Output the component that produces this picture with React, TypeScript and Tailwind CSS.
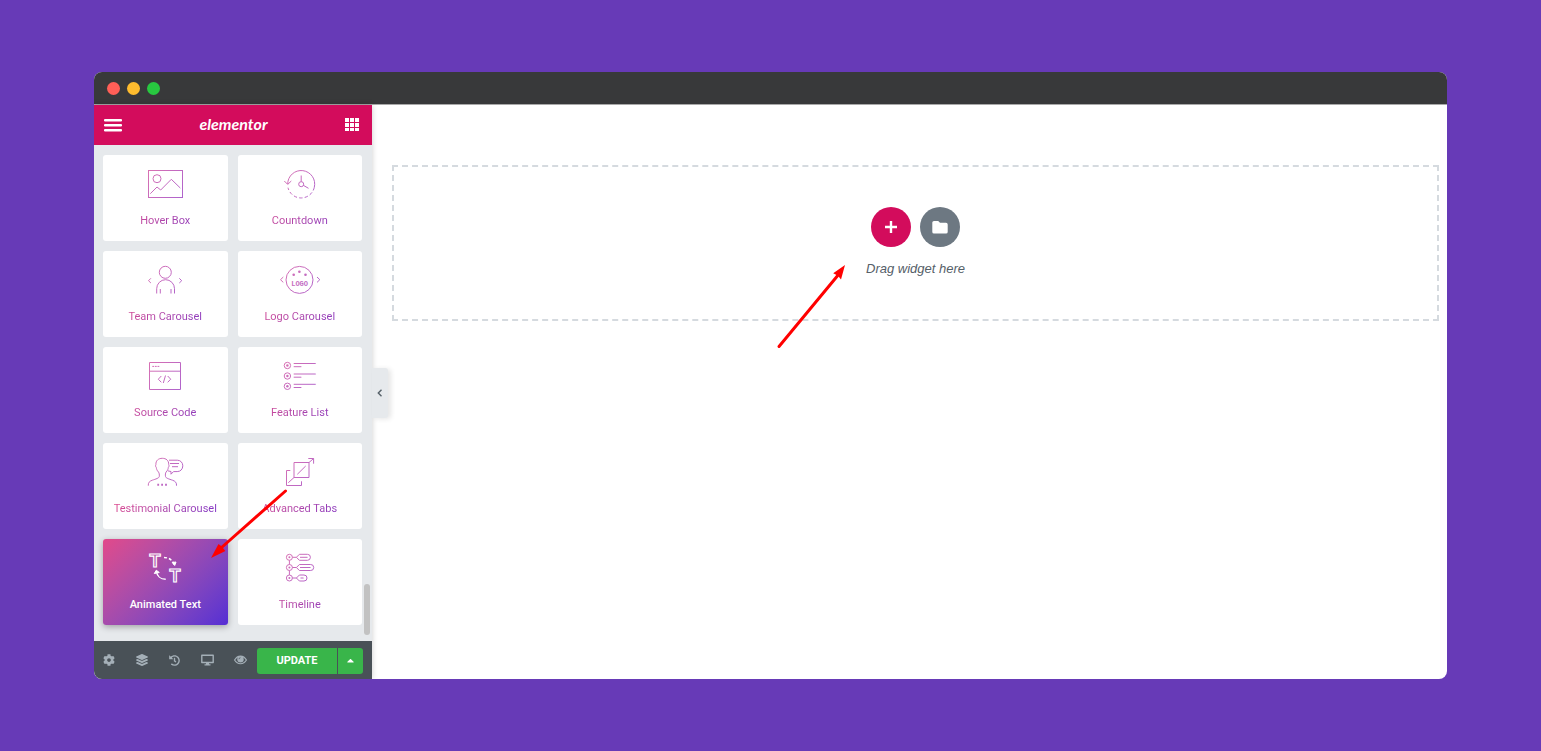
import React from "react";
import { FaCog, FaHistory, FaLayerGroup, FaCaretUp } from "react-icons/fa";

const HoverBoxIcon = () => (
  <>
    <rect x="3.5" y="1.5" width="34" height="27" />
    <circle cx="12" cy="9.7" r="4" />
    <path d="M5.3 24.7 12 18l3.7 3L26.3 10.3l9 8.7" />
  </>
);

const CountdownIcon = () => (
  <>
    <path d="M7.700 15a13.500 13.500 0 1 1 26.600 3.300" />
    <path d="M34.300 18.300A13.500 13.500 0 0 1 8 18.700" strokeDasharray="3.400 2.200" />
    <path d="m4.300 12 3.400 3.400L11.300 12M21.200 12.700V6.500M23.300 16.300l5.200 3" />
    <circle cx="21.200" cy="15.200" r="2.500" />
  </>
);

const TeamIcon = () => (
  <>
    <circle cx="20.3" cy="7.3" r="6" />
    <path d="M11.7 28.5v-4.800a8.900 9 0 0 1 17.800 0v4.800M15.300 24v4.500M26 24v4.500" />
    <path d="m5.900 13.300-2.400 2.400L5.900 18M34.300 13.300l2.400 2.400-2.400 2.300" />
  </>
);

const LogoIcon = () => (
  <>
    <circle cx="19.5" cy="14.900" r="13.500" />
    <path d="M3.300 12 .5 14.700l2.800 2.700M37 12l2.800 2.700-2.800 2.700" />
    <g stroke="none" fill="url(#widget-stroke)">
      <circle cx="13.700" cy="9.700" r="1.300" />
      <circle cx="19.400" cy="6.700" r="1.300" />
      <circle cx="25.500" cy="9.700" r="1.300" />
      <text x="19.600" y="20.500" textAnchor="middle" fontSize="7" fontWeight="700" fontFamily="'Liberation Mono', monospace">
        LOGO
      </text>
    </g>
  </>
);

const SourceIcon = () => (
  <>
    <path d="M4.5 1.5h31v27h-31zM4.5 10.2h31" />
    <path d="M7.3 5.4h7" strokeDasharray="1.8 .8" />
    <path d="m16.3 15-3 3.2 3 3.1M20.5 14.5l-2.2 7.5M22.7 15l3 3.2-3 3.1" />
  </>
);

const FeatureIcon = () => (
  <>
    {[4.5, 15, 25.3].map((y) => (
      <g key={y}>
        <circle cx="7.4" cy={y} r="3.2" />
        <circle cx="7.4" cy={y} r="1.2" fill="url(#widget-stroke)" stroke="none" />
        <path d={`M13.7 ${y - 2}H35.7v.1M13.7 ${y + 1.2}h7.6v.1`} />
      </g>
    ))}
  </>
);

const TestimonialIcon = () => (
  <>
    <path d="M3.300 28.700c-.3-3 1.200-4.500 4-5.500 3.500-1.200 6.700-2 7-3.700.2-2-.1-3.300-.8-4.500-1.600-1.500-2-3-2.200-4.500-.8-.6-.9-2.200-.4-3C10.700 3.500 13.500 1.300 17.300 1.300s6.600 2.200 6.400 6.200c.5.800.4 2.400-.4 3-.2 1.500-.6 3-2.200 4.500-.7 1.200-.9 2.500-.6 4.500.3 1.700 3.500 2.500 7 3.700 2.800 1 4.300 2.500 4 5.500" />
    <path d="M24 3.200h8.300c3.400 0 5.500 2.600 5.500 5.600 0 3.400-2.400 5.800-5.600 5.800h-3.700L26 17.200v-2.700l-3-.6M25 6.500h9M27 9.700h6" />
    <path d="M12.300 27.800h9.600" strokeWidth="2" strokeDasharray="1.800 2.100" />
  </>
);

const AdvancedIcon = () => (
  <>
    <path d="M14 5.500h15v15H14zM17.300 17.300 25.700 9M29 5.500l4.600-4M28.300 1.500h5.300v5.200" />
    <path d="M10.300 13.500H6.500v15h15v-4.200M8.300 25.700l5.700-5.200" />
  </>
);

const AnimatedIcon = () => (
  <>
    <g strokeWidth="1.200" fontSize="18" fontWeight="700" textAnchor="middle" fontFamily="'Liberation Sans', sans-serif">
      <text x="10" y="14">T</text>
      <text x="30" y="28.500">T</text>
    </g>
    <path d="M19 4.500c5 0 8.500 2.500 10 7" strokeDasharray="3 2" strokeWidth="1.400" />
    <path d="M20.700 26.200c-5 0-8.800-3-9.200-8" strokeWidth="1.400" />
    <path d="m27.300 9.500 2.400 3 1.300-3.500zM9.300 20.500l2-3.300 3 2.300z" strokeWidth="1" fill="#ffffff" />
  </>
);

const TimelineIcon = () => (
  <>
    {[4.3, 14.5, 25].map((y) => (
      <g key={y}>
        <circle cx="9.400" cy={y} r="3" />
        <circle cx="9.400" cy={y} r="1" fill="url(#widget-stroke)" stroke="none" />
        <path d={`M12.400 ${y}h4v.1`} />
      </g>
    ))}
    <path d="M9.400 7.300v4.200M9.400 17.500V22" />
    <path d="m16.400 4.300 3-3h8a3 3 0 0 1 0 6h-8zM16.400 14.500l3-3h11.300a3 3 0 0 1 0 6H19.400zM16.400 25l3-3H24a3 3 0 0 1 0 6h-4.600z" />
    <path d="M20 4.300h7.500v.1M20 14.500h10.500v.1M20.500 25h3v.1" />
  </>
);

const widgets = [
  { name: "Hover Box", Icon: HoverBoxIcon },
  { name: "Countdown", Icon: CountdownIcon },
  { name: "Team Carousel", Icon: TeamIcon },
  { name: "Logo Carousel", Icon: LogoIcon },
  { name: "Source Code", Icon: SourceIcon },
  { name: "Feature List", Icon: FeatureIcon },
  { name: "Testimonial Carousel", Icon: TestimonialIcon },
  { name: "Advanced Tabs", Icon: AdvancedIcon },
  { name: "Animated Text", Icon: AnimatedIcon, active: true },
  { name: "Timeline", Icon: TimelineIcon },
];

function Widget({ name, Icon, active }: { name: string; Icon: React.FC; active?: boolean }) {
  return (
    <button
      type="button"
      className={
        active
          ? "flex h-[86px] flex-col items-center rounded-[3px] bg-linear-135 from-[#e2498a] to-[#562dd4] px-2 pt-[14px] shadow-[0_2px_6px_rgba(0,0,0,0.3)]"
          : "flex h-[86px] flex-col items-center rounded-[3px] bg-white px-2 pt-[14px]"
      }
    >
      <svg width="40" height="30" viewBox="0 0 40 30" fill="none" stroke={active ? "#ffffff" : "url(#widget-stroke)"} className="overflow-visible" aria-hidden="true">
        <Icon />
      </svg>
      <span
        className={
          active
            ? "mt-[14px] w-full text-center text-[11px] leading-4 font-medium text-white"
            : "mt-[14px] w-full bg-linear-135 from-[#e2498a] to-[#7a2dc8] bg-clip-text text-center text-[11px] leading-4 text-transparent"
        }
      >
        {name}
      </span>
    </button>
  );
}

const Tool = ({ label, children }: { label: string; children: React.ReactNode }) => (
  <button type="button" aria-label={label} className="flex h-full w-[33px] shrink-0 items-center justify-center text-[12px] text-[#a4afb7]">
    {children}
  </button>
);

export default function App() {
  return (
    <div className="flex min-h-screen flex-col bg-[#673ab7] px-[94px] py-[72px] font-[Roboto,sans-serif]">
      <svg width="0" height="0" className="absolute" aria-hidden="true">
        <linearGradient id="widget-stroke" gradientUnits="userSpaceOnUse" x1="0" y1="0" x2="40" y2="30">
          <stop offset="0" stopColor="#dd72b0" />
          <stop offset="1" stopColor="#ab62cf" />
        </linearGradient>
      </svg>
      <div className="flex flex-1 flex-col overflow-hidden rounded-lg bg-white">
        <div className="flex h-[33px] shrink-0 items-center gap-[7px] border-b border-[#a9a9a9] bg-[#38393a] pt-px pl-[13px]">
          <span className="size-[13px] rounded-full bg-[#ff5f57]" />
          <span className="size-[13px] rounded-full bg-[#febc2e]" />
          <span className="size-[13px] rounded-full bg-[#28c840]" />
        </div>
        <div className="flex flex-1">
          <aside className="relative z-10 flex w-[278px] shrink-0 flex-col bg-[#e6e9ec] shadow-[0_0_6px_rgba(0,0,0,0.2)]">
            <header className="flex h-10 items-center justify-between bg-[#d30c5c] pr-[13px] pl-[10px] text-white">
              <button type="button" aria-label="Menu">
                <svg width="18" height="14" viewBox="0 0 18 14" fill="currentColor" aria-hidden="true">
                  <path d="M1 1h16a1 1 0 0 1 0 2.400H1A1 1 0 0 1 1 1M1 6h16a1 1 0 0 1 0 2.400H1A1 1 0 0 1 1 6M1 11h16a1 1 0 0 1 0 2.400H1A1 1 0 0 1 1 11" />
                </svg>
              </button>
              <span className="pb-[2px] font-[Lato,sans-serif] text-[16px] leading-5 font-bold italic">elementor</span>
              <button type="button" aria-label="Widgets">
                <svg width="14" height="14" viewBox="0 0 14 14" fill="currentColor" aria-hidden="true">
                  <path d="M0 0h4v4H0zM5 0h4v4H5zM10 0h4v4h-4zM0 5h4v4H0zM5 5h4v4H5zM10 5h4v4h-4zM0 10h4v3H0zM5 10h4v3H5zM10 10h4v3h-4z" />
                </svg>
              </button>
            </header>
            <div className="relative grow pt-[10px] pr-[10px] pb-4 pl-[9px]">
              <div className="grid grid-cols-2 gap-[10px]">
                {widgets.map((w) => (
                  <Widget key={w.name} {...w} />
                ))}
              </div>
              <div className="absolute right-[2px] bottom-[6px] h-[51px] w-[6px] rounded-full bg-[#c2c2c2]" />
              <svg width="80" height="74" viewBox="0 0 80 74" className="pointer-events-none absolute top-[342px] left-[115px]" aria-hidden="true">
                <path d="M76.500 4 12 61" stroke="#ff0000" strokeWidth="3" strokeLinecap="round" />
                <path d="m2 71 7.500-14 3.300 2.600 3.600 4.400z" fill="#ff0000" />
              </svg>
            </div>
            <footer className="flex h-[38px] items-center bg-[#495157] pr-[9px]">
              <div className="-ml-[2px] flex h-full flex-1 items-center">
                <Tool label="Settings"><FaCog /></Tool>
                <Tool label="Navigator"><FaLayerGroup /></Tool>
                <Tool label="History"><FaHistory size={11} /></Tool>
                <Tool label="Responsive mode">
                  <svg width="13" height="12" viewBox="0 0 13 12" aria-hidden="true">
                    <path d="M.800 1.200h11.400v7.300H.8z" fill="none" stroke="currentColor" strokeWidth="1.400" strokeLinejoin="round" />
                    <path d="M5 8.500h3v1.700h1.500v1.300h-6v-1.300H5z" fill="currentColor" />
                  </svg>
                </Tool>
                <Tool label="Preview">
                  <svg width="13" height="10" viewBox="0 0 13 10" aria-hidden="true">
                    <path d="M.6 5C3.500-.3 9.500-.3 12.400 5 9.500 10 3.500 10 .6 5z" fill="none" stroke="currentColor" strokeWidth="1.200" />
                    <circle cx="6.500" cy="4.300" r="3.200" fill="currentColor" />
                    <path d="M5 4.200A1.500 1.500 0 0 1 6.500 2.700" stroke="#495157" strokeWidth=".7" fill="none" />
                  </svg>
                </Tool>
              </div>
              <div className="flex h-[27px] gap-px pt-px">
                <button type="button" className="w-20 rounded-l-[3px] bg-[#39b54a] pt-px text-[11px] font-bold text-white">UPDATE</button>
                <button type="button" aria-label="Save options" className="flex w-[25px] items-center justify-center rounded-r-[3px] bg-[#39b54a] text-[11px] text-white">
                  <FaCaretUp />
                </button>
              </div>
            </footer>
            <button
              type="button"
              aria-label="Hide panel"
              className="absolute top-[263px] left-full flex h-[50px] w-[16px] items-center justify-center rounded-r-[3px] bg-[#e6e9ec] text-[#556068] shadow-[3px_1px_5px_rgba(0,0,0,0.1)]"
            >
              <svg width="6" height="8" viewBox="0 0 6 8" fill="none" stroke="currentColor" strokeWidth="1.400" aria-hidden="true">
                <path d="M4.500.8 1.300 4l3.200 3.200" />
              </svg>
            </button>
          </aside>
          <main className="flex-1 pt-[60px] pr-2 pl-5">
            <div className="relative flex h-[156px] flex-col items-center border-2 border-dashed border-[#d5dadf] pt-10">
              <div className="flex gap-[9px]">
                <button type="button" aria-label="Add section" className="flex size-10 items-center justify-center rounded-full bg-[#d30c5c] text-white">
                  <svg width="14" height="14" viewBox="0 0 14 14" stroke="currentColor" strokeWidth="2.400" aria-hidden="true">
                    <path d="M7 1v12M1 7h12" />
                  </svg>
                </button>
                <button type="button" aria-label="Add template" className="flex size-10 items-center justify-center rounded-full bg-[#6d7882] text-white">
                  <svg width="16" height="14" viewBox="0 0 16 14" fill="currentColor" aria-hidden="true">
                    <path d="M2 .9h4.200L8 2.700h6a1.700 1.700 0 0 1 1.700 1.700v7.500a1.700 1.700 0 0 1-1.700 1.700H2A1.700 1.700 0 0 1 .3 11.900V2.600A1.700 1.700 0 0 1 2 .9z" />
                  </svg>
                </button>
              </div>
              <p className="mt-[13px] font-['Liberation_Sans',sans-serif] text-[13px] leading-[18px] text-[#556068] italic">Drag widget here</p>
              <svg width="74" height="88" viewBox="0 0 74 88" className="pointer-events-none absolute top-[95px] right-1/2 mr-[67px]" aria-hidden="true">
                <path d="M4 84.500 64 12" stroke="#ff0000" strokeWidth="3" strokeLinecap="round" />
                <path d="M70 3 66 17.500l-3-3.800-4.800-2.500z" fill="#ff0000" />
              </svg>
            </div>
          </main>
        </div>
      </div>
    </div>
  );
}
